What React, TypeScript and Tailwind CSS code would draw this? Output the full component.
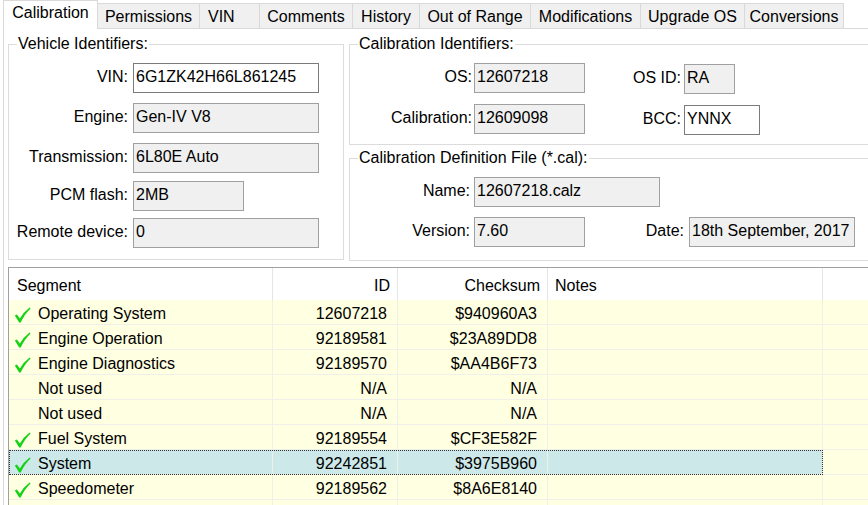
import React from "react";

const tabs = [
  { label: "Permissions", cls: "w-[102px] justify-center" },
  { label: "VIN", cls: "w-[60px] justify-start pl-[8px]" },
  { label: "Comments", cls: "w-[93px] justify-center" },
  { label: "History", cls: "w-[67px] justify-center" },
  { label: "Out of Range", cls: "w-[111px] justify-center" },
  { label: "Modifications", cls: "w-[110px] justify-center" },
  { label: "Upgrade OS", cls: "w-[104px] justify-center" },
  { label: "Conversions", cls: "w-[99px] justify-center" },
];

function Box({ children, w, white }: { children: React.ReactNode; w: string; white?: boolean }) {
  return (
    <div
      className={`${w} h-[30px] shrink-0 border px-[2px] pt-[4px] leading-[18px] whitespace-nowrap overflow-hidden ${
        white ? "bg-white border-[#7a7a7a]" : "bg-[#f0f0f0] border-[#a0a0a0]"
      }`}
    >
      {children}
    </div>
  );
}

function Check() {
  return (
    <svg width="17" height="16" viewBox="0 0 17 16" className="shrink-0">
      <path d="M0.8 8.6 L2.9 7.6 L5.9 11.4 Q9.5 5 15.6 0.4 L16.6 1.4 Q10.5 7 6.7 15.6 L5.2 15.6 Z" fill="#16d216" />
    </svg>
  );
}

const rows = [
  { name: "Operating System", id: "12607218", sum: "$940960A3", ok: true },
  { name: "Engine Operation", id: "92189581", sum: "$23A89DD8", ok: true },
  { name: "Engine Diagnostics", id: "92189570", sum: "$AA4B6F73", ok: true },
  { name: "Not used", id: "N/A", sum: "N/A", ok: false },
  { name: "Not used", id: "N/A", sum: "N/A", ok: false },
  { name: "Fuel System", id: "92189554", sum: "$CF3E582F", ok: true },
  { name: "System", id: "92242851", sum: "$3975B960", ok: true, sel: true },
  { name: "Speedometer", id: "92189562", sum: "$8A6E8140", ok: true },
  { name: "", id: "", sum: "", ok: false },
];

export default function App() {
  return (
    <div className="w-[868px] h-[505px] overflow-hidden bg-white text-black text-[16px] leading-[18px] font-['Liberation_Sans',Arial,sans-serif]">
      {/* Tab strip */}
      <div className="flex h-[29px] pl-[3px]">
        <div className="w-[95px] h-[29px] bg-white border-l border-t border-r border-[#d9d9d9] flex justify-center pt-[3px]">
          Calibration
        </div>
        {tabs.map((t) => (
          <div
            key={t.label}
            className={`${t.cls} mt-[3px] h-[26px] bg-[#f0f0f0] border-t border-r border-b border-[#d9d9d9] flex pt-[4px] whitespace-nowrap`}
          >
            {t.label}
          </div>
        ))}
        <div className="flex-1 border-b border-[#d9d9d9]" />
      </div>

      {/* Panel */}
      <div className="ml-[3px] border-l border-[#d9d9d9] pl-[4px] pt-[6px] h-[476px]">
        <div className="flex h-[226px]">
          {/* Vehicle Identifiers */}
          <fieldset className="w-[336px] h-[225px] border border-[#dcdcdc]">
            <legend className="ml-[8px] px-[1px] leading-[18px]">Vehicle Identifiers:</legend>
            <div className="flex items-start mt-[10px]">
              <div className="w-[119px] text-right pt-[5px] shrink-0">VIN:</div>
              <div className="ml-[5px]"><Box w="w-[186px]" white>6G1ZK42H66L861245</Box></div>
            </div>
            <div className="flex items-start mt-[10px]">
              <div className="w-[119px] text-right pt-[5px] shrink-0">Engine:</div>
              <div className="ml-[5px]"><Box w="w-[186px]">Gen-IV V8</Box></div>
            </div>
            <div className="flex items-start mt-[10px]">
              <div className="w-[119px] text-right pt-[5px] shrink-0">Transmission:</div>
              <div className="ml-[5px]"><Box w="w-[186px]">6L80E Auto</Box></div>
            </div>
            <div className="flex items-start mt-[8px]">
              <div className="w-[119px] text-right pt-[5px] shrink-0">PCM flash:</div>
              <div className="ml-[5px]"><Box w="w-[111px]">2MB</Box></div>
            </div>
            <div className="flex items-start mt-[7px]">
              <div className="w-[119px] text-right pt-[5px] shrink-0 whitespace-nowrap">Remote device:</div>
              <div className="ml-[5px]"><Box w="w-[186px]">0</Box></div>
            </div>
          </fieldset>

          <div className="ml-[5px] flex-1 flex flex-col">
            {/* Calibration Identifiers */}
            <fieldset className="h-[110px] border border-r-0 border-[#dcdcdc]">
              <legend className="ml-[8px] px-[1px] leading-[18px]">Calibration Identifiers:</legend>
              <div className="flex items-start mt-[10px]">
                <div className="w-[122px] text-right pt-[5px] shrink-0">OS:</div>
                <div className="ml-[2px]"><Box w="w-[111px]">12607218</Box></div>
                <div className="w-[96px] text-right pt-[6px] shrink-0">OS ID:</div>
                <div className="ml-[3px] mt-[1px]"><Box w="w-[51px]">RA</Box></div>
              </div>
              <div className="flex items-start mt-[10px]">
                <div className="w-[122px] text-right pt-[5px] shrink-0">Calibration:</div>
                <div className="ml-[2px]"><Box w="w-[111px]">12609098</Box></div>
                <div className="w-[96px] text-right pt-[6px] shrink-0">BCC:</div>
                <div className="ml-[3px] mt-[1px]"><Box w="w-[76px]" white>YNNX</Box></div>
              </div>
            </fieldset>

            {/* Calibration Definition File */}
            <fieldset className="mt-[4px] h-[112px] border border-r-0 border-[#dcdcdc]">
              <legend className="ml-[8px] px-[1px] leading-[18px]">Calibration Definition File (*.cal):</legend>
              <div className="flex items-start mt-[10px]">
                <div className="w-[120px] text-right pt-[5px] shrink-0">Name:</div>
                <div className="ml-[4px]"><Box w="w-[186px]">12607218.calz</Box></div>
              </div>
              <div className="flex items-start mt-[10px]">
                <div className="w-[120px] text-right pt-[5px] shrink-0">Version:</div>
                <div className="ml-[4px]"><Box w="w-[111px]">7.60</Box></div>
                <div className="w-[99px] text-right pt-[5px] shrink-0">Date:</div>
                <div className="ml-[5px]"><Box w="w-[166px]">18th September, 2017</Box></div>
              </div>
            </fieldset>
          </div>
        </div>

        {/* Table */}
        <div className="mt-[6px] border-t border-l border-[#a0a0a0] bg-[#ffffe1]">
          <div className="flex h-[32px] bg-white">
            <div className="w-[264px] border-r border-[#e5e5e5] pl-[8px] pt-[9px]">Segment</div>
            <div className="w-[125px] border-r border-[#e5e5e5] pr-[7px] pt-[9px] text-right">ID</div>
            <div className="w-[150px] border-r border-[#e5e5e5] pr-[7px] pt-[9px] text-right">Checksum</div>
            <div className="w-[275px] border-r border-[#e5e5e5] pl-[7px] pt-[9px]">Notes</div>
            <div className="flex-1" />
          </div>
          {rows.map((r, i) => (
            <div key={i} className="flex h-[25px]">
              <div
                className={`flex w-[814px] ${
                  r.sel ? "bg-[#cce8e8] outline-1 outline-dotted outline-[#333] -outline-offset-1" : ""
                }`}
              >
                <div className="w-[264px] border-r border-b border-[#f0f0ea] flex items-start pl-[5px]">
                  <div className="w-[17px] pt-[7px] shrink-0">{r.ok ? <Check /> : null}</div>
                  <div className="ml-[7px] pt-[5px] whitespace-nowrap">{r.name}</div>
                </div>
                <div className="w-[125px] border-r border-b border-[#f0f0ea] pr-[10px] pt-[5px] text-right">{r.id}</div>
                <div className="w-[150px] border-r border-b border-[#f0f0ea] pr-[10px] pt-[5px] text-right">{r.sum}</div>
                <div className="w-[275px] border-r border-b border-[#f0f0ea]" />
              </div>
              <div className="flex-1 border-b border-[#f0f0ea]" />
            </div>
          ))}
        </div>
      </div>
    </div>
  );
}
